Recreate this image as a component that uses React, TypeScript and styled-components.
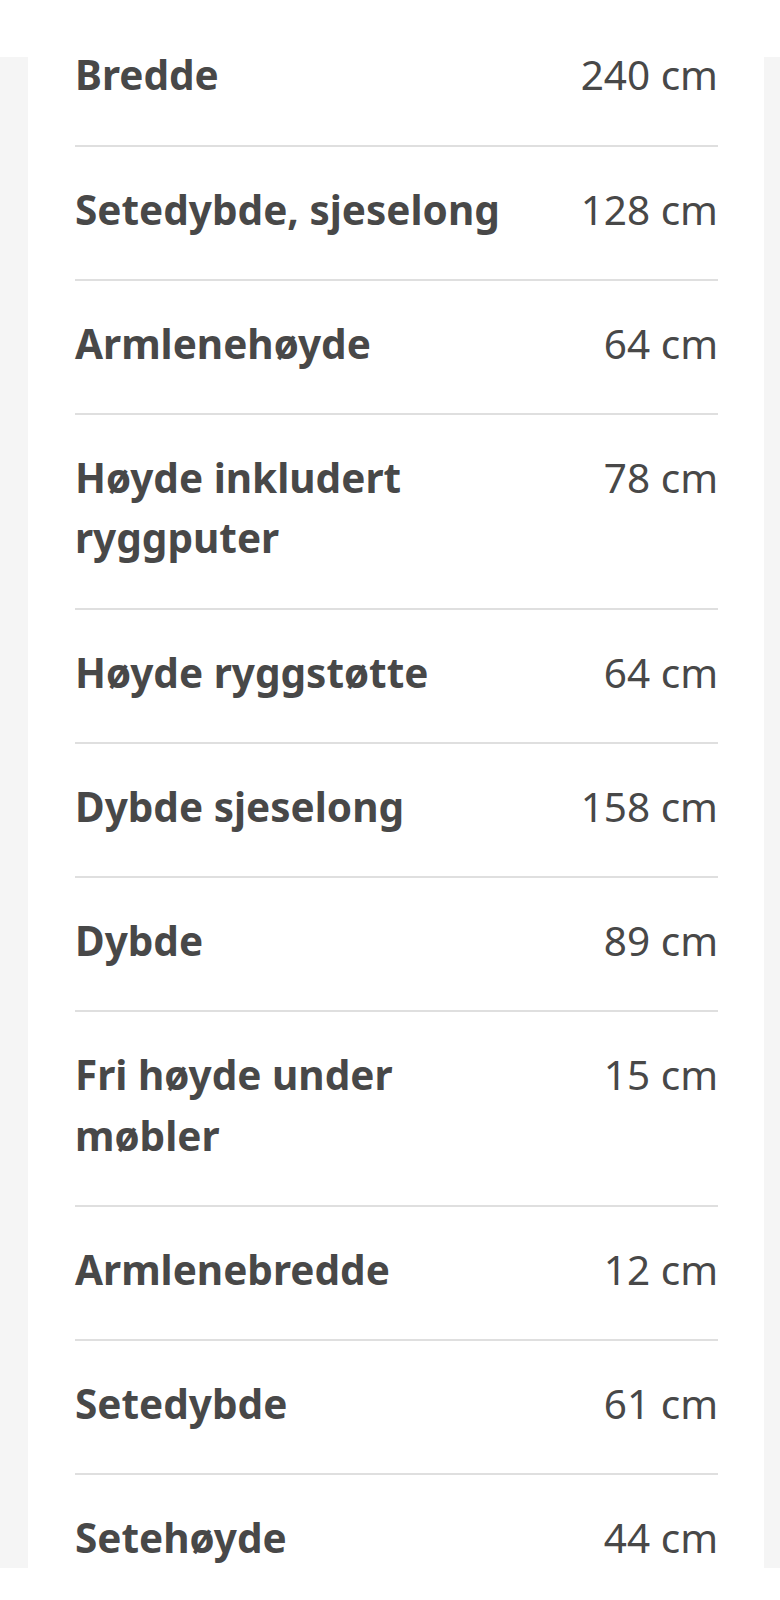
import React from "react";
import styled, { createGlobalStyle } from "styled-components";

const Global = createGlobalStyle`
  html, body { margin: 0; padding: 0; background: #ffffff; }
  body { font-family: "Noto Sans", "Open Sans", "Liberation Sans", sans-serif; }
  * { box-sizing: border-box; }
`;

const Page = styled.div`
  display: flex;
  flex-direction: column;
  width: 780px;
  height: 1600px;
  background: #ffffff;
`;

const Header = styled.header`
  height: 57px;
  flex: 0 0 57px;
  background: #ffffff;
`;

const Viewport = styled.main`
  flex: 0 0 1511px;
  height: 1511px;
  overflow: hidden;
  background: #f5f5f5;
  padding: 0 16px 0 28px;
`;

const Card = styled.dl`
  background: #ffffff;
  margin: -44.6px 0 0;
  padding: 0 46px 0 47px;
  min-height: 1700px;
`;

const Row = styled.div`
  display: grid;
  grid-template-columns: 70% 1fr;
  align-items: start;
  padding: 33px 0 38.35px;
  border-bottom: 2px solid #dfdfdf;
  font-size: 40.5px;
  line-height: 1.5;
  color: #484848;
`;

const Label = styled.dt`
  margin: 0;
  font-weight: 700;
`;

const Value = styled.dd`
  margin: 0;
  font-weight: 400;
  text-align: right;
  white-space: nowrap;
`;

const Footer = styled.footer`
  flex: 1 1 auto;
  background: #ffffff;
`;

const rows: [string, string][] = [
  ["Bredde", "240 cm"],
  ["Setedybde, sjeselong", "128 cm"],
  ["Armlenehøyde", "64 cm"],
  ["Høyde inkludert ryggputer", "78 cm"],
  ["Høyde ryggstøtte", "64 cm"],
  ["Dybde sjeselong", "158 cm"],
  ["Dybde", "89 cm"],
  ["Fri høyde under møbler", "15 cm"],
  ["Armlenebredde", "12 cm"],
  ["Setedybde", "61 cm"],
  ["Setehøyde", "44 cm"],
];

export default function App() {
  return (
    <>
      <Global />
      <Page>
        <Header />
        <Viewport>
          <Card>
            {rows.map(([k, v]) => (
              <Row key={k}>
                <Label>{k}</Label>
                <Value>{v}</Value>
              </Row>
            ))}
          </Card>
        </Viewport>
        <Footer />
      </Page>
    </>
  );
}
